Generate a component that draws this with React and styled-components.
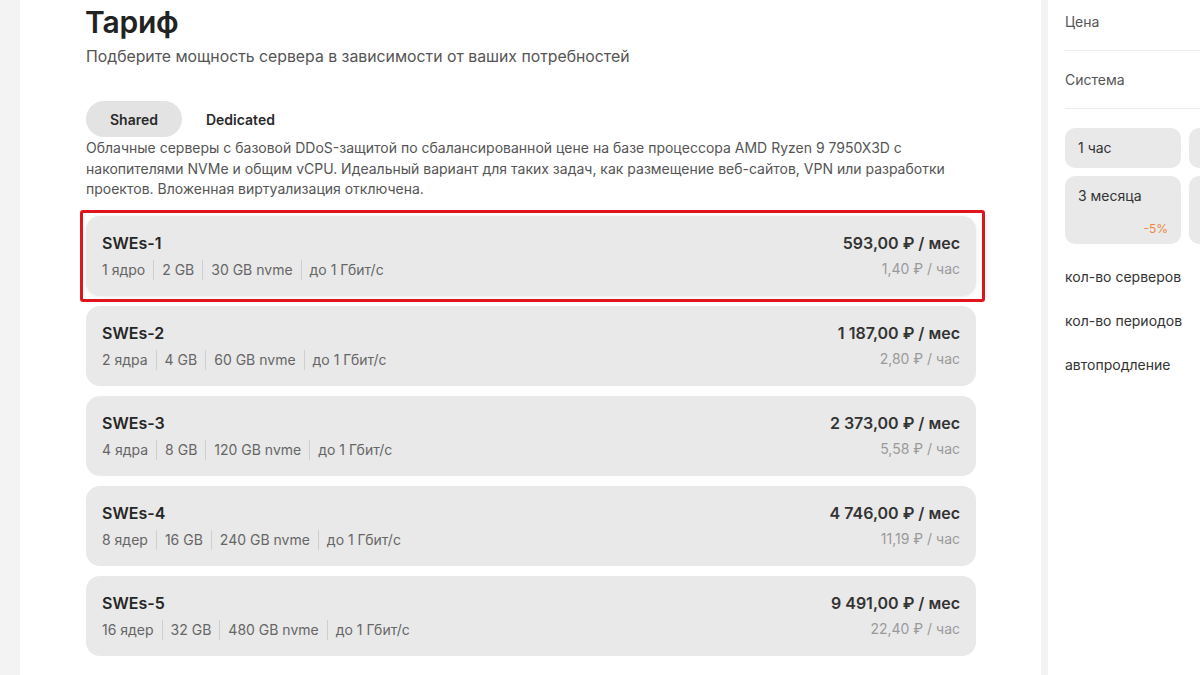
import React from "react";
import styled, { createGlobalStyle } from "styled-components";

const GlobalStyle = createGlobalStyle`
  html, body {
    margin: 0;
    padding: 0;
    background: #f3f3f3;
    font-family: Inter, "Noto Sans", "Liberation Sans", sans-serif;
    -webkit-font-smoothing: antialiased;
  }
  body { overflow: hidden; }
`;

const tariffs = [
  { name: "SWEs-1", specs: ["1 ядро", "2 GB", "30 GB nvme", "до 1 Гбит/с"], month: "593,00 ₽ / мес", hour: "1,40 ₽ / час", active: true },
  { name: "SWEs-2", specs: ["2 ядра", "4 GB", "60 GB nvme", "до 1 Гбит/с"], month: "1 187,00 ₽ / мес", hour: "2,80 ₽ / час" },
  { name: "SWEs-3", specs: ["4 ядра", "8 GB", "120 GB nvme", "до 1 Гбит/с"], month: "2 373,00 ₽ / мес", hour: "5,58 ₽ / час" },
  { name: "SWEs-4", specs: ["8 ядер", "16 GB", "240 GB nvme", "до 1 Гбит/с"], month: "4 746,00 ₽ / мес", hour: "11,19 ₽ / час" },
  { name: "SWEs-5", specs: ["16 ядер", "32 GB", "480 GB nvme", "до 1 Гбит/с"], month: "9 491,00 ₽ / мес", hour: "22,40 ₽ / час" },
];

const Page = styled.div`
  display: flex;
  gap: 7px;
  width: 1200px;
  height: 675px;
  padding-left: 20px;
  box-sizing: border-box;
  overflow: hidden;
`;

const Main = styled.main`
  flex: none;
  width: 1021px;
  background: #fff;
  padding: 2px 65px 0 66px;
  box-sizing: border-box;
`;

const Title = styled.h1`
  margin: 0 0 0 -1px;
  font-size: 30px;
  line-height: 40px;
  font-weight: 600;
  color: #222;
  letter-spacing: -0.2px;
`;

const Subtitle = styled.p`
  margin: 3px 0 0;
  font-size: 15.8px;
  line-height: 24px;
  color: #555;
`;

const Tabs = styled.div`
  display: flex;
  margin-top: 32px;
`;

const Tab = styled.button`
  height: 36px;
  padding: 0 24px;
  border: none;
  border-radius: 18px;
  font-family: inherit;
  font-size: 14px;
  font-weight: 600;
  color: #2a2a2a;
  background: ${(p) => (p.$active ? "#e3e3e3" : "transparent")};
  cursor: pointer;
`;

const Description = styled.p`
  margin: 1px 0 0;
  font-size: 14px;
  line-height: 20.5px;
  color: #555;
  max-width: 890px;
`;

const List = styled.div`
  display: flex;
  flex-direction: column;
  gap: 10px;
  margin-top: 16px;
`;

const Card = styled.div`
  position: relative;
  display: flex;
  justify-content: space-between;
  height: 80px;
  padding: 16px;
  box-sizing: border-box;
  border-radius: 14px;
  background: #e9e9e9;
  box-shadow: ${(p) => (p.$active ? "0 1px 4px rgba(0,0,0,0.08)" : "none")};

  ${(p) =>
    p.$active &&
    `
    &::after {
      content: "";
      position: absolute;
      top: -6px;
      left: -6px;
      right: -9px;
      bottom: -6px;
      border: 3px solid #e0141b;
      border-radius: 3px;
      pointer-events: none;
    }
  `}
`;

const Col = styled.div`
  display: flex;
  flex-direction: column;
  gap: 6px;
  align-items: ${(p) => (p.$right ? "flex-end" : "flex-start")};
`;

const Name = styled.div`
  font-size: 16px;
  line-height: 22px;
  font-weight: 600;
  color: #262626;
`;

const Specs = styled.div`
  display: flex;
  font-size: 14px;
  line-height: 20px;
  color: #666;
`;

const Spec = styled.span`
  padding: 0 8px;
  border-left: 1px solid #cfcfcf;

  &:first-child {
    padding-left: 0;
    border-left: none;
  }
`;

const Month = styled.div`
  font-size: 16px;
  line-height: 22px;
  font-weight: 600;
  color: #333;
`;

const Hour = styled.div`
  font-size: 14px;
  line-height: 18px;
  color: #9a9a9a;
`;

const Side = styled.aside`
  flex: none;
  width: 400px;
  background: #fff;
  padding: 12px 0 0 17px;
  box-sizing: border-box;
`;

const SideRow = styled.div`
  padding: ${(p) => (p.$first ? "0" : "19px")} 0 18px;
  border-bottom: 1px solid #ececec;
  font-size: 14px;
  line-height: 20px;
  color: #555;
`;

const Periods = styled.div`
  display: grid;
  grid-template-columns: repeat(3, 116px);
  grid-template-rows: 40px 68px;
  gap: 8px;
  margin-top: 19px;
`;

const Period = styled.div`
  display: flex;
  flex-direction: column;
  justify-content: space-between;
  padding: 10px 13px 7px;
  box-sizing: border-box;
  border-radius: 10px;
  background: #e9e9e9;
  font-size: 14px;
  line-height: 20px;
  color: #333;
`;

const Discount = styled.span`
  align-self: flex-end;
  font-size: 12px;
  line-height: 16px;
  color: #f0883e;
`;

const Labels = styled.div`
  display: flex;
  flex-direction: column;
  margin-top: 11px;
`;

const Label = styled.div`
  padding: 12px 0;
  font-size: 14px;
  line-height: 20px;
  color: #333;
`;

export default function App() {
  return (
    <>
      <GlobalStyle />
      <Page>
        <Main>
          <Title>Тариф</Title>
          <Subtitle>Подберите мощность сервера в зависимости от ваших потребностей</Subtitle>
          <Tabs>
            <Tab $active>Shared</Tab>
            <Tab>Dedicated</Tab>
          </Tabs>
          <Description>
            Облачные серверы с базовой DDoS-защитой по сбалансированной цене на базе процессора AMD Ryzen 9 7950X3D с
            накопителями NVMe и общим vCPU. Идеальный вариант для таких задач, как размещение веб-сайтов, VPN или разработки
            проектов. Вложенная виртуализация отключена.
          </Description>
          <List>
            {tariffs.map((t) => (
              <Card key={t.name} $active={t.active}>
                <Col>
                  <Name>{t.name}</Name>
                  <Specs>
                    {t.specs.map((s) => (
                      <Spec key={s}>{s}</Spec>
                    ))}
                  </Specs>
                </Col>
                <Col $right>
                  <Month>{t.month}</Month>
                  <Hour>{t.hour}</Hour>
                </Col>
              </Card>
            ))}
          </List>
        </Main>
        <Side>
          <SideRow $first>Цена</SideRow>
          <SideRow>Система</SideRow>
          <Periods>
            <Period>1 час</Period>
            <Period />
            <Period />
            <Period>
              3 месяца
              <Discount>-5%</Discount>
            </Period>
            <Period />
            <Period />
          </Periods>
          <Labels>
            <Label>кол-во серверов</Label>
            <Label>кол-во периодов</Label>
            <Label>автопродление</Label>
          </Labels>
        </Side>
      </Page>
    </>
  );
}
